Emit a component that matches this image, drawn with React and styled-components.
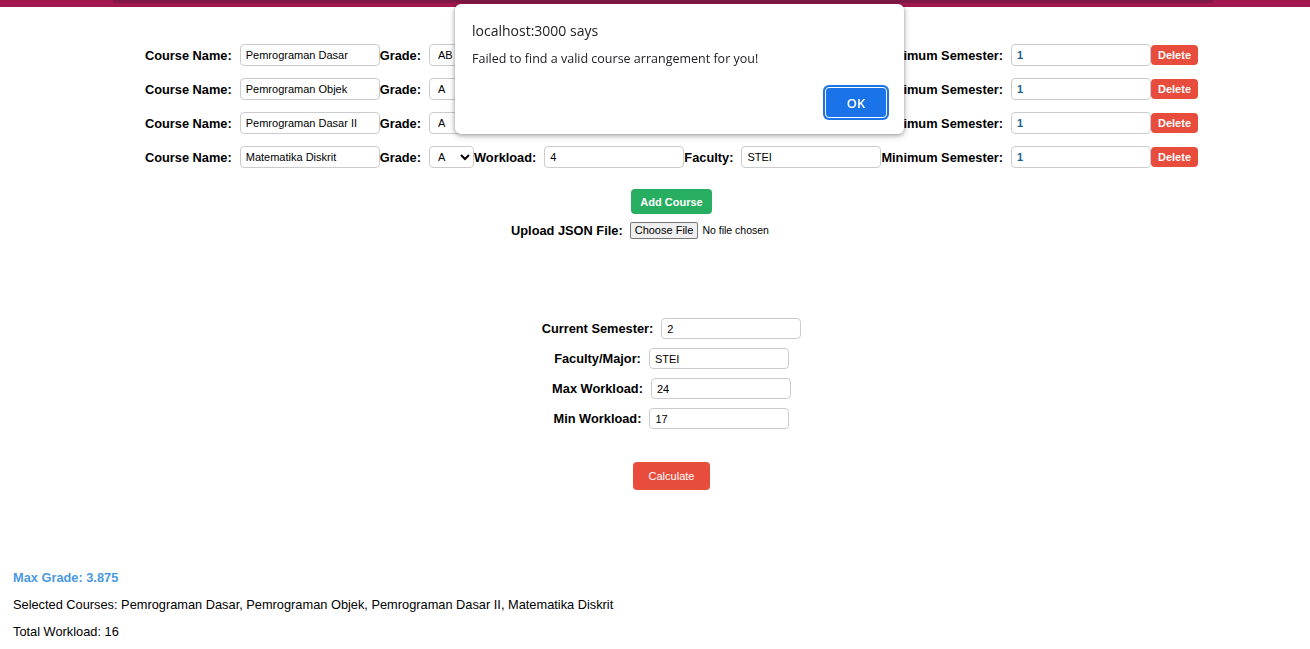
import styled, { createGlobalStyle } from "styled-components";

const courses = [
  { name: "Pemrograman Dasar", grade: "AB", workload: "", faculty: "", minSem: "1" },
  { name: "Pemrograman Objek", grade: "A", workload: "", faculty: "", minSem: "1" },
  { name: "Pemrograman Dasar II", grade: "A", workload: "", faculty: "", minSem: "1" },
  { name: "Matematika Diskrit", grade: "A", workload: "4", faculty: "STEI", minSem: "1" },
];

const grades = ["A", "AB", "B", "BC", "C", "D", "E"];

const settings = [
  { label: "Current Semester:", value: "2" },
  { label: "Faculty/Major:", value: "STEI" },
  { label: "Max Workload:", value: "24" },
  { label: "Min Workload:", value: "17" },
];

const App = () => {
  return (
    <>
      <GlobalStyle />
      <TopBar>
        <TopBand />
      </TopBar>

      <Main>
        <CourseList>
          {courses.map((c, i) => (
            <CourseRow key={i}>
              <Label>Course Name:</Label>
              <TextInput defaultValue={c.name} />
              <Label>Grade:</Label>
              <GradeSelect defaultValue={c.grade}>
                {grades.map((g) => (
                  <option key={g} value={g}>
                    {g}
                  </option>
                ))}
              </GradeSelect>
              <Label>Workload:</Label>
              <TextInput defaultValue={c.workload} />
              <Label>Faculty:</Label>
              <TextInput defaultValue={c.faculty} />
              <Label>Minimum Semester:</Label>
              <TextInput defaultValue={c.minSem} $accent />
              <SmallButton $color="#e74c3c">Delete</SmallButton>
            </CourseRow>
          ))}
        </CourseList>

        <AddButton $color="#27ae60">Add Course</AddButton>

        <UploadRow>
          <Label>Upload JSON File:</Label>
          <FileButton>Choose File</FileButton>
          <FileText>No file chosen</FileText>
        </UploadRow>

        <SettingsList>
          {settings.map((s) => (
            <SettingRow key={s.label}>
              <Label>{s.label}</Label>
              <TextInput defaultValue={s.value} />
            </SettingRow>
          ))}
        </SettingsList>

        <CalcButton $color="#e74c3c">Calculate</CalcButton>
      </Main>

      <Results>
        <MaxGrade>Max Grade: 3.875</MaxGrade>
        <ResultLine>
          Selected Courses: Pemrograman Dasar, Pemrograman Objek, Pemrograman
          Dasar II, Matematika Diskrit
        </ResultLine>
        <ResultLine>Total Workload: 16</ResultLine>
      </Results>

      <Dialog>
        <DialogTitle>localhost:3000 says</DialogTitle>
        <DialogMessage>Failed to find a valid course arrangement for you!</DialogMessage>
        <DialogActions>
          <OkButton>OK</OkButton>
        </DialogActions>
      </Dialog>
    </>
  );
};

export default App;

const GlobalStyle = createGlobalStyle`
  body {
    margin: 0;
    background: #fff;
    font-family: "Liberation Sans", Arial, sans-serif;
    color: #000;
  }
`;

const TopBar = styled.div`
  height: 7px;
  background: #a3174f;
  display: flex;
  justify-content: center;
`;

const TopBand = styled.div`
  width: 1100px;
  height: 3px;
  margin-left: 16px;
  background: #7e1846;
  border-radius: 0 0 4px 4px;
`;

const Main = styled.div`
  display: flex;
  flex-direction: column;
  align-items: center;
  padding-left: 33px;
  padding-top: 37px;
`;

const CourseList = styled.div`
  display: flex;
  flex-direction: column;
  gap: 12px;
`;

const CourseRow = styled.div`
  display: flex;
  align-items: center;
  height: 22px;
`;

const Label = styled.label`
  font-size: 12.8px;
  font-weight: bold;
  margin-right: 8px;
  white-space: nowrap;
`;

const TextInput = styled.input`
  box-sizing: border-box;
  width: 140px;
  height: 22px;
  padding: 2px 5px;
  border: 1px solid #ccc;
  border-radius: 4px;
  font-family: "Liberation Sans", Arial, sans-serif;
  font-size: 11px;
  color: ${(p) => (p.$accent ? "#1f5f8f" : "#000")};
  font-weight: ${(p) => (p.$accent ? "bold" : "normal")};
  outline: none;
`;

const GradeSelect = styled.select`
  box-sizing: border-box;
  width: 45px;
  height: 22px;
  padding: 0 2px 0 4px;
  border: 1px solid #ccc;
  border-radius: 4px;
  font-family: "Liberation Sans", Arial, sans-serif;
  font-size: 11px;
  background: #fff;
  color: #000;
`;

const SmallButton = styled.button`
  box-sizing: border-box;
  width: 47px;
  height: 20px;
  padding: 0;
  border: none;
  border-radius: 4px;
  background: ${(p) => p.$color};
  color: #fff;
  font-family: "Liberation Sans", Arial, sans-serif;
  font-size: 11px;
  font-weight: bold;
`;

const AddButton = styled.button`
  margin-top: 21px;
  width: 81px;
  height: 25px;
  padding: 0;
  border: none;
  border-radius: 4px;
  background: ${(p) => p.$color};
  color: #fff;
  font-family: "Liberation Sans", Arial, sans-serif;
  font-size: 11px;
  font-weight: bold;
`;

const UploadRow = styled.div`
  display: flex;
  align-items: center;
  margin-top: 5px;
  margin-left: -63px;
  height: 22px;
`;

const FileButton = styled.span`
  box-sizing: border-box;
  height: 17px;
  padding: 0 4px;
  display: inline-flex;
  align-items: center;
  border: 1px solid #767676;
  border-radius: 2px;
  background: #efefef;
  font-size: 11px;
  margin-left: -1px;
`;

const FileText = styled.span`
  font-size: 10.5px;
  margin-left: 4px;
`;

const SettingsList = styled.div`
  display: flex;
  flex-direction: column;
  align-items: center;
  gap: 9px;
  margin-top: 77px;
`;

const SettingRow = styled.div`
  display: flex;
  align-items: center;
  height: 21px;

  input {
    height: 21px;
  }
`;

const CalcButton = styled.button`
  margin-top: 33px;
  width: 77px;
  height: 28px;
  padding: 0;
  border: none;
  border-radius: 4px;
  background: ${(p) => p.$color};
  color: #fff;
  font-family: "Liberation Sans", Arial, sans-serif;
  font-size: 11px;
`;

const Results = styled.div`
  padding: 0 13px;
  margin-top: 80px;
  display: flex;
  flex-direction: column;
  gap: 11px;
`;

const MaxGrade = styled.div`
  font-size: 12.8px;
  font-weight: bold;
  color: #4a9ae0;
  line-height: 16px;
`;

const ResultLine = styled.div`
  font-size: 12.8px;
  line-height: 16px;
`;

const Dialog = styled.div`
  position: fixed;
  top: 4px;
  left: 455px;
  width: 449px;
  height: 130px;
  box-sizing: border-box;
  padding: 17px 17px 16px 17px;
  background: #fff;
  border-radius: 6px;
  box-shadow: 0 1px 4px rgba(0, 0, 0, 0.35), 0 2px 10px rgba(0, 0, 0, 0.15);
  font-family: "Open Sans", "Noto Sans", sans-serif;
  color: #202124;
  display: flex;
  flex-direction: column;
`;

const DialogTitle = styled.div`
  font-size: 14px;
  line-height: 20px;
`;

const DialogMessage = styled.div`
  margin-top: 9px;
  font-size: 12.5px;
  line-height: 18px;
`;

const DialogActions = styled.div`
  margin-top: auto;
  display: flex;
  justify-content: flex-end;
`;

const OkButton = styled.button`
  width: 62px;
  height: 31px;
  border: 1px solid #fff;
  border-radius: 4px;
  background: #1a73e8;
  color: #fff;
  font-family: "Open Sans", "Noto Sans", sans-serif;
  font-size: 13px;
  font-weight: 600;
  box-shadow: 0 0 0 2px #1a73e8;
`;
